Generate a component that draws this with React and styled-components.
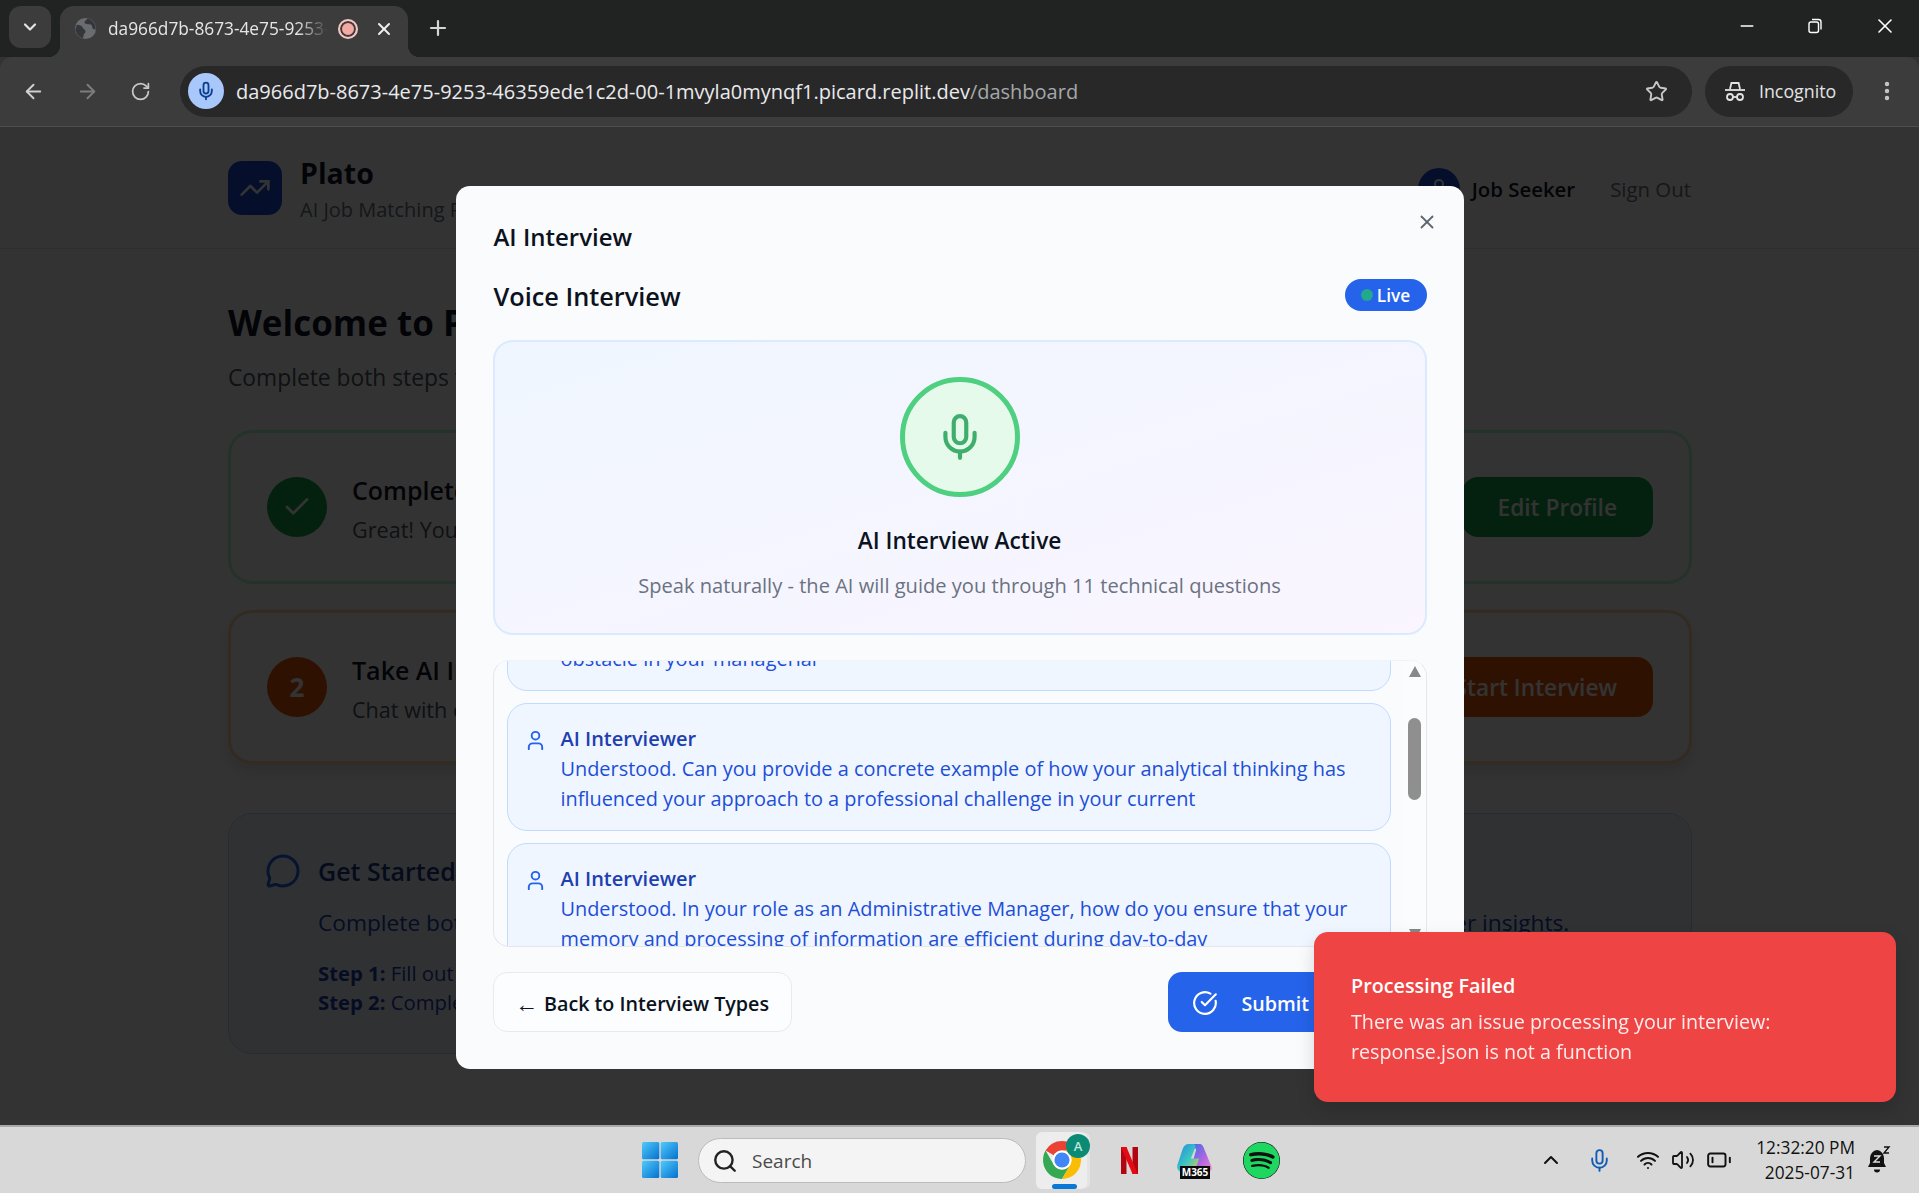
import React from "react";
import styled, { createGlobalStyle } from "styled-components";
import {
  ArrowLeft,
  ArrowRight,
  BatteryLow,
  Check,
  ChevronDown,
  ChevronUp,
  CircleCheckBig,
  EllipsisVertical,
  MessageCircle,
  Mic,
  Minus,
  Plus,
  RotateCw,
  Search,
  Star,
  TrendingUp,
  User,
  Volume2,
  Wifi,
  X,
} from "lucide-react";
import { FaSpotify } from "react-icons/fa";

const GlobalStyle = createGlobalStyle`
  * { box-sizing: border-box; }
  html, body { margin: 0; padding: 0; background: #333; }
  body { font-family: "Open Sans", "Noto Sans", "Liberation Sans", sans-serif; }
`;

function RestoreIcon() {
  return (
    <svg width="16" height="16" viewBox="0 0 16 16" fill="none" stroke="#fff" strokeWidth="1.4">
      <rect x="2" y="4" width="9.5" height="10.5" rx="2" />
      <path d="M5 1.5h6.5a2.5 2.5 0 0 1 2.5 2.5v7.5" />
    </svg>
  );
}

function TabGlobe() {
  return (
    <svg width="23" height="23" viewBox="0 0 24 24">
      <circle cx="12" cy="12" r="11" fill="#6a6d70" />
      <path d="M3 8c3 0 5 1 6 3s3 2 3 4-2 2-2 4-1 3-1 3C5 21 2 17 1.500 13ZM14 1.500c-1 2-3 2-3 4s3 2 5 2 3 1 3 3 2 3 3.500 2.500c.5-5-3-10.500-8.500-11.500Z" fill="#33363a" />
    </svg>
  );
}

function IncognitoIcon() {
  return (
    <svg width="24" height="24" viewBox="0 0 24 24" fill="none" stroke="#e3e3e3" strokeWidth="1.8">
      <path d="M7 10l1.4-6h7.2l1.4 6" />
      <path d="M2 11h20" />
      <circle cx="7" cy="18" r="3" />
      <circle cx="17" cy="18" r="3" />
      <path d="M10 18h4" />
    </svg>
  );
}

function WindowsLogo() {
  return (
    <svg width="36" height="36" viewBox="0 0 36 36">
      <defs>
        <linearGradient id="win" x1="0" y1="0" x2="1" y2="1">
          <stop offset="0" stopColor="#4fcbfb" />
          <stop offset="1" stopColor="#0670cf" />
        </linearGradient>
      </defs>
      <rect x="0" y="0" width="17.3" height="17.3" rx="1.5" fill="url(#win)" />
      <rect x="18.7" y="0" width="17.3" height="17.3" rx="1.5" fill="url(#win)" />
      <rect x="0" y="18.7" width="17.3" height="17.3" rx="1.5" fill="url(#win)" />
      <rect x="18.7" y="18.7" width="17.3" height="17.3" rx="1.5" fill="url(#win)" />
    </svg>
  );
}

function ChromeLogo() {
  return (
    <svg width="38" height="38" viewBox="4 4 40 40">
      <path d="M24 4A20 20 0 0 1 41.3 14H24A10 10 0 0 0 15.3 19L6.7 14A20 20 0 0 1 24 4Z" fill="#ea4335" />
      <path d="M6.7 14A20 20 0 0 0 24 44L32.7 29A10 10 0 0 1 15.3 29Z" fill="#34a853" />
      <path d="M41.3 14A20 20 0 0 1 24 44L32.7 29A10 10 0 0 0 24 14Z" fill="#fbbc04" />
      <circle cx="24" cy="24" r="10" fill="#fff" />
      <circle cx="24" cy="24" r="8" fill="#4285f4" />
    </svg>
  );
}

function NetflixLogo() {
  return (
    <svg width="17" height="27" viewBox="0 0 17 27">
      <path d="M0 0h5.5v27L0 27.6Z" fill="#b1060f" />
      <path d="M11.5 0H17v27.6l-5.5-.6Z" fill="#b1060f" />
      <path d="M0 0h5.5L17 27.6 11.5 27Z" fill="#e50914" />
    </svg>
  );
}

function CopilotBlob() {
  return (
    <svg width="38" height="31" viewBox="0 0 36 30">
      <defs>
        <linearGradient id="cpa" x1="0" y1="0" x2="1" y2="1">
          <stop offset="0" stopColor="#1b8be0" />
          <stop offset="0.55" stopColor="#3fc7c0" />
          <stop offset="1" stopColor="#f5c542" />
        </linearGradient>
        <linearGradient id="cpb" x1="0" y1="0" x2="1" y2="1">
          <stop offset="0" stopColor="#2f6fe8" />
          <stop offset="0.6" stopColor="#b266e0" />
          <stop offset="1" stopColor="#f08acb" />
        </linearGradient>
      </defs>
      <path d="M12 2h10c3 0 4 2 5 5l7 17c1 3-1 5-4 5H18c-4 0-4-4-3-7L19 8c.5-2-1-2-3-2Z" fill="url(#cpb)" />
      <path d="M12 2c-3 0-5 2-6 5L1 22c-1 4 1 7 5 7h8c3 0 4-2 5-4l3-9H14l4-10c1-2 0-4-2-4Z" fill="url(#cpa)" />
    </svg>
  );
}

function SnoozeBell() {
  return (
    <svg width="24" height="28" viewBox="0 0 24 28">
      <path d="M10 4a8 8 0 0 0-7 8v5l-2 4h18l-2-4v-5a8 8 0 0 0-7-8Z" fill="#111" />
      <path d="M7 23.5h6a3 3 0 0 1-6 0Z" fill="#111" />
      <path d="M7 10h6l-6 6h6" fill="none" stroke="#ddd" strokeWidth="1.4" />
      <path d="M17 1h5l-5 6h5" fill="none" stroke="#111" strokeWidth="1.4" />
    </svg>
  );
}

const messages = [
  ["Understood. Can you provide a concrete example of how your analytical thinking has", "influenced your approach to a professional challenge in your current"],
  ["Understood. In your role as an Administrative Manager, how do you ensure that your", "memory and processing of information are efficient during day-to-day"],
];

export default function App() {
  return (
    <Screen>
      <GlobalStyle />
      <TabStrip>
        <TabMenu><ChevronDown size={20} color="#e3e3e3" strokeWidth={2.6} /></TabMenu>
        <Tab>
          <TabGlobe />
          <TabTitle>da966d7b-8673-4e75-9253-46359ede1c2d</TabTitle>
          <RecordDot />
          <TabClose><X size={20} color="#f0f0f0" strokeWidth={2.4} /></TabClose>
        </Tab>
        <NewTab><Plus size={24} color="#d5d5d5" strokeWidth={2.2} /></NewTab>
        <WindowControls>
          <Minus size={20} color="#fff" strokeWidth={1.6} />
          <RestoreIcon />
          <X size={24} color="#fff" strokeWidth={1.6} />
        </WindowControls>
      </TabStrip>

      <Toolbar>
        <NavButtons>
          <ArrowLeft size={23} color="#d0d0d0" strokeWidth={2} />
          <ArrowRight size={23} color="#7d7d7d" strokeWidth={2} />
          <RotateCw size={21} color="#c8c8c8" strokeWidth={2} />
        </NavButtons>
        <AddressBar>
          <MicChip><Mic size={20} color="#0b3f8f" strokeWidth={2.2} /></MicChip>
          <Url>
            da966d7b-8673-4e75-9253-46359ede1c2d-00-1mvyla0mynqf1.picard.replit.dev
            <UrlPath>/dashboard</UrlPath>
          </Url>
          <Star size={23} color="#c7c7c7" strokeWidth={2} />
        </AddressBar>
        <IncognitoPill>
          <IncognitoIcon />
          Incognito
        </IncognitoPill>
        <EllipsisVertical size={24} color="#c7c7c7" strokeWidth={2.4} />
      </Toolbar>

      <Viewport>
        <SiteHeader>
          <Brand>
            <LogoTile><TrendingUp size={32} color="#fff" strokeWidth={2} /></LogoTile>
            <BrandCopy>
              <BrandName>Plato</BrandName>
              <BrandTag>AI Job Matching Platform</BrandTag>
            </BrandCopy>
          </Brand>
          <UserArea>
            <Avatar><User size={24} color="#fff" /></Avatar>
            <UserName>Job Seeker</UserName>
            <SignOut>Sign Out</SignOut>
          </UserArea>
        </SiteHeader>

        <Main>
          <Welcome>Welcome to Plato</Welcome>
          <Lead>Complete both steps to get matched with the right jobs</Lead>

          <StepCard $border="#bbf7d0">
            <StepLead>
              <StepBadge $bg="#16a34a"><Check size={30} color="#fff" strokeWidth={2.2} /></StepBadge>
              <StepCopy>
                <StepTitle>Complete Your Profile</StepTitle>
                <StepText>Great! Your profile is complete.</StepText>
              </StepCopy>
            </StepLead>
            <StepButton $bg="#16a34a">Edit Profile</StepButton>
          </StepCard>

          <StepCard $border="#fed7aa" $raised>
            <StepLead>
              <StepBadge $bg="#ea580c">2</StepBadge>
              <StepCopy>
                <StepTitle>Take AI Interview</StepTitle>
                <StepText>Chat with our AI about your experience</StepText>
              </StepCopy>
            </StepLead>
            <StepButton $bg="#ea580c">Start Interview</StepButton>
          </StepCard>

          <InfoCard>
            <InfoHeading>
              <MessageCircle size={36} color="#2563eb" strokeWidth={2} />
              <InfoTitle>Get Started</InfoTitle>
            </InfoHeading>
            <InfoBody>
              <InfoLine>Complete both your profile and AI interview to help unlock personalized job matches and receive much better insights.</InfoLine>
              <InfoSteps>
                <div><b>Step 1:</b> Fill out your profile</div>
                <div><b>Step 2:</b> Complete the AI interview</div>
              </InfoSteps>
            </InfoBody>
          </InfoCard>
        </Main>

        <Overlay>
          <Modal>
            <CloseButton><X size={22} color="#5f6672" strokeWidth={2} /></CloseButton>
            <ModalTitle>AI Interview</ModalTitle>
            <VoiceRow>
              <VoiceTitle>Voice Interview</VoiceTitle>
              <LiveBadge><LiveDot />Live</LiveBadge>
            </VoiceRow>

            <ActiveCard>
              <MicRing><Mic size={50} color="#3fae6c" strokeWidth={2} /></MicRing>
              <ActiveTitle>AI Interview Active</ActiveTitle>
              <ActiveText>Speak naturally - the AI will guide you through 11 technical questions</ActiveText>
            </ActiveCard>

            <Transcript>
              <MessageClip>
                <MessageList>
                  <Message>
                    <MessageText>obstacle in your managerial</MessageText>
                  </Message>
                  {messages.map((lines) => (
                    <Message key={lines[0]}>
                      <MessageIcon><User size={23} color="#2563eb" strokeWidth={2} /></MessageIcon>
                      <div>
                        <Speaker>AI Interviewer</Speaker>
                        {lines.map((line) => <MessageText key={line}>{line}</MessageText>)}
                      </div>
                    </Message>
                  ))}
                </MessageList>
              </MessageClip>
              <ScrollTrack>
                <ScrollArrow />
                <ScrollThumb />
                <ScrollArrow $down />
              </ScrollTrack>
            </Transcript>

            <ModalFooter>
              <BackButton><BackArrow>←</BackArrow> Back to Interview Types</BackButton>
              <SubmitButton>
                <CircleCheckBig size={26} color="#fff" strokeWidth={2} />
                Submit
              </SubmitButton>
            </ModalFooter>
          </Modal>
        </Overlay>

        <Toast>
          <ToastTitle>Processing Failed</ToastTitle>
          <ToastText>There was an issue processing your interview:</ToastText>
          <ToastText>response.json is not a function</ToastText>
        </Toast>
      </Viewport>

      <Taskbar>
        <TaskCenter>
          <WindowsLogo />
          <SearchBox>
            <Search size={26} color="#222" strokeWidth={2.2} />
            Search
          </SearchBox>
          <ChromeTile>
            <ChromeLogo />
            <ProfileBadge>A</ProfileBadge>
            <ActiveMark />
          </ChromeTile>
          <TaskApp><NetflixLogo /></TaskApp>
          <TaskApp>
            <M365Stack>
              <CopilotBlob />
              <M365Label>M365</M365Label>
            </M365Stack>
          </TaskApp>
          <TaskApp><SpotifyMark size={37} color="#1ed760" /></TaskApp>
        </TaskCenter>
        <Tray>
          <ChevronUp size={24} color="#111" strokeWidth={2} />
          <TrayMic><Mic size={25} color="#0f5bb5" strokeWidth={1.8} /></TrayMic>
          <TrayGroup>
            <Wifi size={24} color="#111" strokeWidth={2} />
            <Volume2 size={24} color="#111" strokeWidth={1.8} />
            <BatteryLow size={26} color="#111" strokeWidth={1.8} />
          </TrayGroup>
          <Clock>
            <div>12:32:20 PM</div>
            <div>2025-07-31</div>
          </Clock>
          <SnoozeBell />
        </Tray>
      </Taskbar>
    </Screen>
  );
}

const Screen = styled.div`
  width: 1919px;
  height: 1193px;
  overflow: hidden;
  display: flex;
  flex-direction: column;
`;

const TabStrip = styled.div`
  height: 57px;
  flex: none;
  background: #202322;
  display: flex;
  align-items: flex-end;
  padding-left: 9px;
`;

const TabMenu = styled.div`
  width: 42px;
  height: 42px;
  margin-bottom: 9px;
  border-radius: 12px;
  background: #3c3c3c;
  display: flex;
  align-items: center;
  justify-content: center;
`;

const Tab = styled.div`
  position: relative;
  width: 348px;
  height: 51px;
  margin-left: 9px;
  padding: 0 14px 6px 14px;
  background: #3c3c3c;
  border-radius: 14px 14px 0 0;
  display: flex;
  align-items: center;
  &::before,
  &::after {
    content: "";
    position: absolute;
    bottom: 0;
    width: 12px;
    height: 12px;
  }
  &::before {
    left: -12px;
    background: radial-gradient(circle at 0 0, #202322 12px, #3c3c3c 12.5px);
  }
  &::after {
    right: -12px;
    background: radial-gradient(circle at 100% 0, #202322 12px, #3c3c3c 12.5px);
  }
`;

const TabTitle = styled.div`
  width: 220px;
  margin-left: 11px;
  font-size: 17.3px;
  color: #e6e6e6;
  white-space: nowrap;
  overflow: hidden;
  -webkit-mask-image: linear-gradient(to right, #000 86%, transparent 100%);
  mask-image: linear-gradient(to right, #000 86%, transparent 100%);
`;

const RecordDot = styled.div`
  width: 20px;
  height: 20px;
  margin-left: 10px;
  border-radius: 50%;
  border: 2.5px solid #f4c7c3;
  background: #f4a9a3;
  box-shadow: inset 0 0 0 2px #3c3c3c;
  flex: none;
`;

const TabClose = styled.div`
  margin-left: 16px;
  display: flex;
`;

const NewTab = styled.div`
  margin: 0 0 17px 18px;
  display: flex;
`;

const WindowControls = styled.div`
  margin: 0 22px 19px auto;
  display: flex;
  align-items: center;
  gap: 50px;
`;

const Toolbar = styled.div`
  height: 70px;
  flex: none;
  background: #3c3c3c;
  border-top-left-radius: 12px;
  border-top-right-radius: 12px;
  border-bottom: 1px solid #4e4e4e;
  display: flex;
  align-items: center;
  padding: 0 20px 1px 22px;
`;

const NavButtons = styled.div`
  display: flex;
  align-items: center;
  gap: 31px;
  width: 158px;
`;

const AddressBar = styled.div`
  width: 1512px;
  height: 51px;
  border-radius: 26px;
  background: #282828;
  display: flex;
  align-items: center;
  padding: 0 24px 0 8px;
`;

const MicChip = styled.div`
  width: 36px;
  height: 36px;
  flex: none;
  border-radius: 50%;
  background: #a8c7fa;
  display: flex;
  align-items: center;
  justify-content: center;
`;

const Url = styled.div`
  flex: 1;
  margin-left: 12px;
  font-size: 20px;
  color: #e8eaed;
  white-space: nowrap;
`;

const UrlPath = styled.span`
  color: #a5a8ab;
`;

const IncognitoPill = styled.div`
  width: 148px;
  height: 51px;
  margin: 0 22px 0 13px;
  border-radius: 26px;
  background: #282828;
  color: #e3e3e3;
  font-size: 17.8px;
  display: flex;
  align-items: center;
  gap: 12px;
  padding-left: 18px;
`;

const Viewport = styled.div`
  position: relative;
  flex: 1;
  min-height: 0;
  overflow: hidden;
  background: #fff;
`;

const SiteHeader = styled.header`
  height: 122px;
  padding: 0 228px;
  border-bottom: 1px solid #e5e7eb;
  background: #fff;
  display: flex;
  align-items: center;
  justify-content: space-between;
`;

const Brand = styled.div`
  display: flex;
  align-items: center;
  gap: 18px;
`;

const BrandCopy = styled.div`
  padding-top: 4px;
`;

const LogoTile = styled.div`
  width: 54px;
  height: 54px;
  border-radius: 14px;
  background: #1d4ed8;
  display: flex;
  align-items: center;
  justify-content: center;
`;

const BrandName = styled.div`
  font-size: 28.5px;
  font-weight: 700;
  line-height: 38px;
  color: #111827;
`;

const BrandTag = styled.div`
  margin-top: 3px;
  font-size: 20px;
  line-height: 30px;
  color: #6b7280;
  white-space: nowrap;
`;

const UserArea = styled.div`
  padding-top: 3px;
  display: flex;
  align-items: center;
`;

const Avatar = styled.div`
  width: 42px;
  height: 42px;
  border-radius: 50%;
  background: #1d4ed8;
  display: flex;
  align-items: center;
  justify-content: center;
`;

const UserName = styled.div`
  margin-left: 12px;
  font-size: 20.4px;
  font-weight: 600;
  color: #111827;
`;

const SignOut = styled.div`
  margin-left: 35px;
  font-size: 20.4px;
  color: #6b7280;
`;

const Main = styled.main`
  width: 1464px;
  margin: 0 0 0 228px;
  padding-top: 51px;
`;

const Welcome = styled.h1`
  margin: 0;
  font-size: 35px;
  line-height: 46px;
  font-weight: 700;
  color: #111827;
  white-space: nowrap;
`;

const Lead = styled.p`
  margin: 17px 0 37px;
  font-size: 22.8px;
  line-height: 30px;
  color: #4b5563;
  white-space: nowrap;
`;

const StepCard = styled.section`
  height: 154px;
  margin-bottom: 26px;
  padding: 0 36px;
  border: 3px solid ${(p) => p.$border};
  border-radius: 24px;
  background: #fff;
  box-shadow: ${(p) => (p.$raised ? "0 8px 16px rgba(0,0,0,0.12)" : "none")};
  display: flex;
  align-items: center;
  justify-content: space-between;
`;

const StepLead = styled.div`
  display: flex;
  align-items: center;
  gap: 25px;
`;

const StepCopy = styled.div`
  padding-top: 5px;
`;

const StepBadge = styled.div`
  width: 60px;
  height: 60px;
  border-radius: 50%;
  background: ${(p) => p.$bg};
  color: #fff;
  font-size: 26px;
  font-weight: 700;
  display: flex;
  align-items: center;
  justify-content: center;
`;

const StepTitle = styled.div`
  font-size: 25px;
  line-height: 36px;
  font-weight: 600;
  color: #111827;
`;

const StepText = styled.div`
  margin-top: 5px;
  font-size: 21.6px;
  line-height: 34px;
  color: #4b5563;
`;

const StepButton = styled.div`
  height: 60px;
  padding: 0 36px;
  border-radius: 16px;
  background: ${(p) => p.$bg};
  color: #fff;
  font-size: 22.7px;
  font-weight: 600;
  display: flex;
  align-items: center;
`;

const InfoCard = styled.section`
  height: 241px;
  margin-top: 49px;
  padding: 38px 38px;
  border: 1px solid #bfdbfe;
  border-radius: 24px;
  background: #eff6ff;
`;

const InfoHeading = styled.div`
  margin-left: -2px;
  display: flex;
  align-items: center;
  gap: 17px;
`;

const InfoTitle = styled.div`
  font-size: 25px;
  font-weight: 600;
  line-height: 38px;
  color: #1e3a8a;
`;

const InfoBody = styled.div`
  padding-left: 51px;
`;

const InfoLine = styled.p`
  margin: 18px 0 21px;
  font-size: 22.7px;
  line-height: 30px;
  color: #1e40af;
  white-space: nowrap;
`;

const InfoSteps = styled.div`
  font-size: 20.3px;
  line-height: 29px;
  color: #1e40af;
`;

const Overlay = styled.div`
  position: absolute;
  inset: 0;
  background: rgba(0, 0, 0, 0.8);
  display: flex;
  align-items: flex-start;
  justify-content: center;
  padding-top: 59px;
`;

const Modal = styled.div`
  position: relative;
  width: 1008px;
  height: 883px;
  padding: 34px 37px 37px;
  border-radius: 14px;
  background: #fafbfd;
  display: flex;
  flex-direction: column;
`;

const CloseButton = styled.div`
  position: absolute;
  top: 25px;
  right: 26px;
  display: flex;
`;

const ModalTitle = styled.h2`
  margin: 0;
  padding-left: 1px;
  font-size: 24px;
  line-height: 34px;
  font-weight: 600;
  color: #0b1220;
`;

const VoiceRow = styled.div`
  margin-top: 25px;
  height: 34px;
  display: flex;
  align-items: center;
  justify-content: space-between;
`;

const VoiceTitle = styled.h3`
  margin: 0;
  padding-left: 1px;
  font-size: 25.3px;
  line-height: 34px;
  font-weight: 600;
  color: #0b1220;
`;

const LiveBadge = styled.div`
  height: 32px;
  width: 82px;
  margin-top: -2px;
  border-radius: 16px;
  background: #2563eb;
  color: #fff;
  font-size: 17.3px;
  font-weight: 600;
  display: flex;
  align-items: center;
  justify-content: center;
  gap: 4px;
`;

const LiveDot = styled.span`
  width: 12px;
  height: 12px;
  border-radius: 50%;
  background: #22a88a;
`;

const ActiveCard = styled.div`
  height: 295px;
  margin-top: 27px;
  padding-top: 35px;
  border: 2px solid #dbeafe;
  border-radius: 20px;
  background: linear-gradient(to bottom right, #eff6ff 0%, #faf5ff 100%);
  display: flex;
  flex-direction: column;
  align-items: center;
`;

const MicRing = styled.div`
  width: 120px;
  height: 120px;
  border-radius: 50%;
  border: 5px solid #4fcf80;
  background: #e5faeb;
  display: flex;
  align-items: center;
  justify-content: center;
`;

const ActiveTitle = styled.div`
  margin-top: 28px;
  font-size: 22.7px;
  line-height: 32px;
  font-weight: 600;
  color: #0b1220;
`;

const ActiveText = styled.div`
  margin-top: 14px;
  font-size: 20.1px;
  line-height: 30px;
  color: #6b7280;
`;

const Transcript = styled.div`
  height: 287px;
  margin-top: 25px;
  border: 1px solid #e5e7eb;
  border-top-color: #f1f3f6;
  border-radius: 16px;
  overflow: hidden;
  display: flex;
`;

const MessageClip = styled.div`
  flex: 1;
  min-width: 0;
  overflow: hidden;
`;

const MessageList = styled.div`
  margin-top: -38px;
  padding: 0 13px 0 13px;
  display: flex;
  flex-direction: column;
  gap: 12px;
`;

const Message = styled.div`
  padding: 20px 30px 16px 16px;
  border: 1.5px solid #bfdbfe;
  border-radius: 20px;
  background: #eff6ff;
  display: flex;
  gap: 12px;
  &:first-child {
    padding-left: 53px;
  }
`;

const MessageIcon = styled.div`
  width: 25px;
  padding-top: 5px;
  flex: none;
`;

const Speaker = styled.div`
  font-size: 20px;
  line-height: 30px;
  font-weight: 600;
  color: #1e40af;
`;

const MessageText = styled.div`
  font-size: 19.9px;
  line-height: 30px;
  color: #1d4ed8;
  white-space: nowrap;
`;

const ScrollTrack = styled.div`
  width: 22px;
  flex: none;
  background: #fbfcfd;
  display: flex;
  flex-direction: column;
  align-items: center;
  padding: 5px 0 0;
`;

const ScrollArrow = styled.div`
  width: 0;
  height: 0;
  flex: none;
  border-left: 6px solid transparent;
  border-right: 6px solid transparent;
  ${(p) => (p.$down ? "border-top: 11px solid #888; margin-top: 129px;" : "border-bottom: 11px solid #888;")}
`;

const ScrollThumb = styled.div`
  width: 13px;
  height: 82px;
  margin-top: 41px;
  border-radius: 7px;
  background: #8f8f8f;
  flex: none;
`;

const ModalFooter = styled.div`
  margin-top: 25px;
  height: 60px;
  display: flex;
  justify-content: space-between;
`;

const BackButton = styled.div`
  width: 299px;
  padding-top: 2px;
  border: 1.5px solid #e8eaf0;
  border-radius: 14px;
  background: #fcfdfe;
  color: #0b1220;
  font-size: 19.7px;
  font-weight: 600;
  display: flex;
  align-items: center;
  justify-content: center;
  gap: 6px;
  white-space: nowrap;
`;

const BackArrow = styled.span`
  font-size: 23px;
  font-weight: 400;
  line-height: 24px;
`;

const SubmitButton = styled.div`
  width: 259px;
  padding: 2px 0 0 24px;
  border-radius: 14px;
  background: #2563eb;
  color: #fff;
  font-size: 19.7px;
  font-weight: 600;
  display: flex;
  align-items: center;
  gap: 24px;
  white-space: nowrap;
`;

const Toast = styled.div`
  position: absolute;
  right: 23px;
  bottom: 23px;
  width: 582px;
  height: 170px;
  padding: 39px 37px;
  border-radius: 14px;
  background: #ef4444;
  color: #fff;
  box-shadow: 0 8px 18px rgba(0, 0, 0, 0.15);
`;

const ToastTitle = styled.div`
  font-size: 19.8px;
  line-height: 30px;
  font-weight: 600;
  margin-bottom: 6px;
`;

const ToastText = styled.div`
  font-size: 19.7px;
  line-height: 30px;
  opacity: 0.9;
`;

const Taskbar = styled.div`
  height: 68px;
  flex: none;
  position: relative;
  background: #d8d8d8;
  border-top: 2px solid #a8a8a8;
  display: flex;
  align-items: center;
  justify-content: flex-end;
`;

const TaskCenter = styled.div`
  position: absolute;
  left: 642px;
  top: 0;
  bottom: 0;
  display: flex;
  align-items: center;
`;

const SearchBox = styled.div`
  width: 328px;
  height: 45px;
  margin-left: 20px;
  padding: 1px 0 0 13px;
  border-radius: 23px;
  background: #f4f4f4;
  border: 1.5px solid #bcbcbc;
  color: #4a4a4a;
  font-size: 19px;
  display: flex;
  align-items: center;
  gap: 14px;
`;

const ChromeTile = styled.div`
  position: relative;
  width: 51px;
  height: 57px;
  margin: 0 3px 0 10px;
  border-radius: 6px;
  background: #ededed;
  box-shadow: 4px 0 0 -1px #e4e4e4;
  display: flex;
  align-items: center;
  justify-content: center;
`;

const ProfileBadge = styled.div`
  position: absolute;
  top: 2px;
  right: -3px;
  width: 24px;
  height: 24px;
  border-radius: 50%;
  background: #0b8a75;
  color: #bfe5dc;
  font-size: 13px;
  font-weight: 600;
  display: flex;
  align-items: center;
  justify-content: center;
`;

const ActiveMark = styled.div`
  position: absolute;
  bottom: 0;
  left: 16px;
  width: 25px;
  height: 5px;
  border-radius: 3px;
  background: #0a78d6;
`;

const TaskApp = styled.div`
  width: 54px;
  margin-left: 12px;
  display: flex;
  align-items: center;
  justify-content: center;
`;

const SpotifyMark = styled(FaSpotify)`
  background: #111;
  border-radius: 50%;
`;

const M365Stack = styled.div`
  display: flex;
  flex-direction: column;
  align-items: center;
`;

const M365Label = styled.div`
  margin-top: -7px;
  padding: 0 2px;
  background: #0a0a0a;
  color: #fff;
  font-size: 10px;
  line-height: 13px;
  font-weight: 700;
`;

const Tray = styled.div`
  display: flex;
  align-items: center;
  padding-right: 28px;
`;

const TrayMic = styled.div`
  margin-left: 24px;
  display: flex;
`;

const TrayGroup = styled.div`
  margin-left: 24px;
  display: flex;
  align-items: center;
  gap: 11px;
`;

const Clock = styled.div`
  width: 110px;
  margin: 0 12px 0 13px;
  text-align: right;
  font-size: 17.3px;
  line-height: 25px;
  color: #111;
  white-space: nowrap;
`;
